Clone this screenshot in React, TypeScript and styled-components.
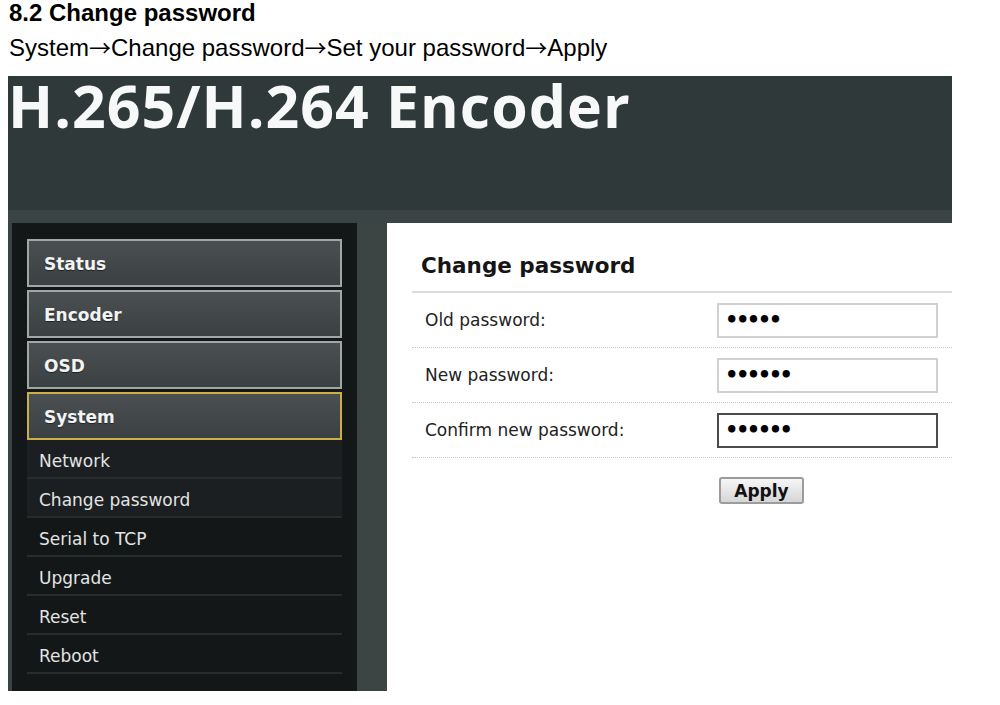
import React from "react";
import styled, { createGlobalStyle } from "styled-components";

const GlobalStyle = createGlobalStyle`
  html, body { margin: 0; padding: 0; background: #ffffff; }
  body { font-family: "Liberation Sans", Arial, sans-serif; }
  * { box-sizing: border-box; }
`;

const Page = styled.div`
  width: 1000px;
  height: 705px;
  overflow: hidden;
  background: #fff;
`;

const DocTitle = styled.h1`
  margin: 0;
  padding: 1px 0 0 9px;
  font: 700 24px/24px "Liberation Sans", Arial, sans-serif;
  color: #000;
`;

const DocPath = styled.p`
  margin: 11px 0 0;
  padding-left: 9px;
  font: 400 24px/24px "Liberation Sans", Arial, sans-serif;
  color: #000;
`;

const Arrow = styled.span`
  font-family: "Noto Sans CJK SC", "DejaVu Sans", sans-serif;
  font-size: 22px;
  line-height: 0;
`;

const Shot = styled.div`
  margin: 16px 0 0 8px;
  width: 944px;
  display: flex;
  flex-direction: column;
`;

const Header = styled.div`
  height: 134px;
  background: #2f393a;
`;

const Brand = styled.div`
  font: 700 59px/59px "Open Sans", "Noto Sans", sans-serif;
  color: #f7f8f8;
  letter-spacing: 1px;
  white-space: nowrap;
`;

const Band = styled.div`
  height: 13px;
  background: #3a4445;
`;

const Body = styled.div`
  display: grid;
  grid-template-columns: 4px 345px 30px 1fr;
  height: 468px;
`;

const Strip = styled.div`
  background: #3a4343;
`;

const Sidebar = styled.nav`
  background: #131718;
  padding: 16px 15px 0;
  display: flex;
  flex-direction: column;
`;

const ButtonStack = styled.div`
  display: flex;
  flex-direction: column;
  gap: 3px;
`;

const MenuButton = styled.div<{ $active?: boolean }>`
  height: 48px;
  border: 2px solid ${(p) => (p.$active ? "#cdb045" : "#a2a6a6")};
  background: linear-gradient(#4a5051, #3b4142);
  display: flex;
  align-items: center;
  padding: 2px 0 0 15px;
  font: 700 17px "DejaVu Sans", Verdana, sans-serif;
  color: #f3f3f3;
  text-shadow: 0 1px 1px rgba(0, 0, 0, 0.5);
`;

const SubMenu = styled.div`
  display: flex;
  flex-direction: column;
`;

const SubItem = styled.div<{ $lit?: boolean }>`
  height: 39px;
  border-bottom: 2px solid #272c2d;
  background: ${(p) => (p.$lit ? "#1b1f21" : "transparent")};
  display: flex;
  align-items: center;
  padding: 4px 0 0 12px;
  font: 400 17px "DejaVu Sans", Verdana, sans-serif;
  color: #e3e3e3;
`;

const GrayCol = styled.div`
  background: #3c4544;
`;

const Panel = styled.section`
  background: #fff;
  padding: 30px 0 0 25px;
  display: flex;
  flex-direction: column;
`;

const PanelTitle = styled.h2`
  margin: 0;
  padding: 0 0 12px 9px;
  border-bottom: 2px solid #dcdcdc;
  font: 700 21.5px/26px "DejaVu Sans", Verdana, sans-serif;
  color: #151515;
`;

const FieldRow = styled.div`
  display: grid;
  grid-template-columns: 305px 221px;
  align-items: center;
  height: 55px;
  border-bottom: 1px dotted #c9c9c9;
`;

const Label = styled.label`
  padding-left: 13px;
  font: 400 17px "DejaVu Sans", Verdana, sans-serif;
  color: #222;
`;

const PasswordBox = styled.input<{ $focus?: boolean }>`
  width: 221px;
  height: 35px;
  border: 2px solid ${(p) => (p.$focus ? "#4b4b4b" : "#d0d0d0")};
  background: #fff;
  padding: 0 0 0 6px;
  font: 700 21px "DejaVu Sans", Verdana, sans-serif;
  letter-spacing: -2.5px;
  color: #000;
  outline: none;
  border-radius: 0;
`;

const Actions = styled.div`
  display: grid;
  grid-template-columns: 307px auto;
  padding-top: 19px;
`;

const ApplyButton = styled.button`
  width: 85px;
  height: 27px;
  border: 2px solid #9c9c9c;
  border-radius: 3px;
  background: linear-gradient(#f6f6f6, #d6d6d6);
  font: 700 17px "DejaVu Sans", Verdana, sans-serif;
  color: #111;
  padding: 0;
  justify-self: start;
`;

const menu = ["Status", "Encoder", "OSD", "System"];
const sub = ["Network", "Change password", "Serial to TCP", "Upgrade", "Reset", "Reboot"];
const fields = [
  { label: "Old password:", value: "12345", focus: false },
  { label: "New password:", value: "123456", focus: false },
  { label: "Confirm new password:", value: "123456", focus: true },
];
const path = ["System", "Change password", "Set your password", "Apply"];

export default function App() {
  return (
    <Page>
      <GlobalStyle />
      <DocTitle>8.2 Change password</DocTitle>
      <DocPath>
        {path.map((p, i) => (
          <React.Fragment key={p}>
            {i > 0 && <Arrow>→</Arrow>}
            {p}
          </React.Fragment>
        ))}
      </DocPath>
      <Shot>
        <Header>
          <Brand>H.265/H.264 Encoder</Brand>
        </Header>
        <Band />
        <Body>
          <Strip />
          <Sidebar>
            <ButtonStack>
              {menu.map((m) => (
                <MenuButton key={m} $active={m === "System"}>
                  {m}
                </MenuButton>
              ))}
            </ButtonStack>
            <SubMenu>
              {sub.map((s, i) => (
                <SubItem key={s} $lit={i < 2}>
                  {s}
                </SubItem>
              ))}
            </SubMenu>
          </Sidebar>
          <GrayCol />
          <Panel>
            <PanelTitle>Change password</PanelTitle>
            {fields.map((f) => (
              <FieldRow key={f.label}>
                <Label>{f.label}</Label>
                <PasswordBox type="password" readOnly defaultValue={f.value} $focus={f.focus} />
              </FieldRow>
            ))}
            <Actions>
              <span />
              <ApplyButton type="button">Apply</ApplyButton>
            </Actions>
          </Panel>
        </Body>
      </Shot>
    </Page>
  );
}
